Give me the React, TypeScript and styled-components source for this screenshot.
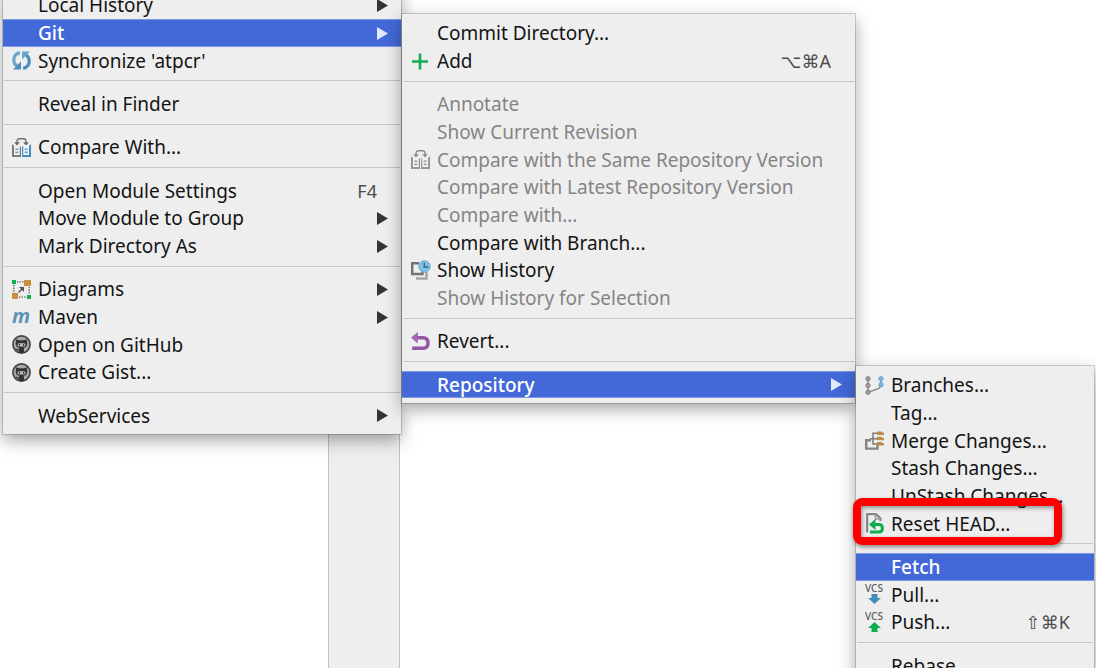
import React from "react";
import styled, { createGlobalStyle, css } from "styled-components";

const GlobalStyle = createGlobalStyle`
  * { box-sizing: border-box; }
  body { margin: 0; background: #fff; overflow: hidden; }
`;

const Page = styled.main`
  position: relative;
  display: flex;
  height: 100vh;
  padding-left: 328px;
  overflow: hidden;
  font-family: "Noto Sans", "Open Sans", sans-serif;
  font-size: 19px;
  line-height: 28px;
`;

const SidePanel = styled.aside`
  width: 72px;
  background: #eeeeee;
  border: solid #c2c2c2;
  border-width: 0 1px;
`;

const Menu = styled.ul<{ $width: number }>`
  position: absolute;
  top: -5px;
  left: calc(100% + 1px);
  z-index: 1;
  width: ${(p) => p.$width}px;
  margin: 0;
  padding: 5px 0;
  list-style: none;
  background: #eeeeee;
  box-shadow: 0 0 0 1px rgba(0, 0, 0, 0.16), 0 6px 16px rgba(0, 0, 0, 0.36);
`;

const RootMenu = styled(Menu)`
  top: -14px;
  left: 3px;
`;

const Row = styled.li`
  position: relative;
  height: 28px;
  &:nth-child(3n) {
    height: 27px;
  }
`;

const Separator = styled.li`
  height: 16px;
  padding: 6px 1px 0;
  &:nth-child(3n) {
    height: 15px;
  }
  &::before {
    content: "";
    display: block;
    height: 1px;
    background: #c6c6c6;
  }
`;

const ItemButton = styled.button<{ $active?: boolean }>`
  display: flex;
  align-items: center;
  width: 100%;
  height: 100%;
  padding: 0 13px 0 9px;
  border: 0;
  background: transparent;
  color: #141414;
  font: inherit;
  text-align: left;
  white-space: nowrap;
  &:disabled {
    color: #858585;
  }
  ${(p) =>
    p.$active &&
    css`
      background: #4369d8;
      border: solid #7f98e4;
      border-width: 1px 0;
      color: #fff;
      font-weight: 500;
    `}
`;

const IconSlot = styled.span`
  display: flex;
  width: 19px;
  height: 19px;
  margin-right: 7px;
`;

const Label = styled.span`
  flex: 1;
`;

const Shortcut = styled.kbd`
  margin-right: 11px;
  color: #4c4c4c;
  font-family: "Noto Sans", "DejaVu Sans", sans-serif;
  font-size: 18px;
`;

const Highlight = styled.div`
  position: absolute;
  top: -12px;
  left: -3px;
  width: 209px;
  height: 47px;
  border: 8px solid #fe0000;
  border-radius: 9px;
  box-shadow: 1px 2px 4px rgba(0, 0, 0, 0.45), inset 1px 2px 4px rgba(0, 0, 0, 0.4);
  pointer-events: none;
`;

const IconSvg = styled.svg`
  overflow: visible;
`;

const Svg = ({ children }: { children: React.ReactNode }) => (
  <IconSvg width="19" height="19" viewBox="0 0 19 19" fill="none" aria-hidden="true">
    {children}
  </IconSvg>
);

const ArrowSvg = styled.svg`
  opacity: 0.85;
`;

const Arrow = () => (
  <ArrowSvg width="11" height="13" viewBox="0 0 11 13" aria-hidden="true">
    <path d="M0 0L11 6.5L0 13Z" fill="currentColor" />
  </ArrowSvg>
);

const SyncIcon = () => (
  <Svg>
    <path d="M7.8 1.6C3.8 2.6 1.4 5.8 1.8 9.6C2 12 3.2 14 5.2 15.2" stroke="#6aa5cb" strokeWidth="3.2" />
    <path d="M1 18.5H9V10.4Z" fill="#4a8fbd" />
    <path d="M11.2 17.4C15.2 16.4 17.6 13.2 17.2 9.4C17 7 15.8 5 13.8 3.8" stroke="#4a8fbd" strokeWidth="3.2" />
    <path d="M18 .5H10V8.6Z" fill="#6aa5cb" />
  </Svg>
);

const CompareIcon = ({ muted }: { muted?: boolean }) => (
  <Svg>
    <path d="M5 5V3.2Q5 .8 7.4 .8H11.6Q14 .8 14 3.2V5" stroke={muted ? "#8c8c8c" : "#707070"} strokeWidth="1.4" />
    <path d="M2.2 4.2H7.8L5 7.6ZM11.2 4.2H16.8L14 7.6Z" fill={muted ? "#8c8c8c" : "#666"} />
    <path d="M0 6L2 8V17H9V19H0Z" fill={muted ? "#969696" : "#7c7c7c"} />
    <path d="M19 6L17 8V17H10V19H19Z" fill={muted ? "#969696" : "#3f8fc0"} />
    <path d="M7.5 8.5H9V19H7.5Z" fill={muted ? "#969696" : "#7c7c7c"} />
    <path d="M10 8.5H11.5V19H10Z" fill={muted ? "#969696" : "#3f8fc0"} />
    <path d="M2 8.5H7.5V17H2ZM11.5 8.5H17V17H11.5Z" fill="#f4f6f8" />
    <path d="M3.2 11.2H6.4M3.2 14.4H6.4M12.6 11.2H15.8M12.6 14.4H15.8" stroke={muted ? "#9c9c9c" : "#6da4c8"} strokeWidth="1.6" />
  </Svg>
);

const DiagramIcon = () => (
  <Svg>
    <path d="M5 1.8H12M1.8 5V13M17.2 7V14M7 17.2H14" stroke="#555" strokeWidth="1.3" strokeDasharray="1.3 1.3" />
    <path d="M0 0H4V4H0ZM15 15H19V19H15Z" fill="#0db14b" />
    <path d="M12 0H19V6H12ZM0 13H6V19H0Z" fill="#c9913c" />
    <path d="M6.5 12.5L11 8" stroke="#555" strokeWidth="1.5" />
    <path d="M7 7H12V12Z" fill="#555" />
  </Svg>
);

const MavenText = styled.text`
  font: italic 700 20px "Open Sans", sans-serif;
  fill: #5f93b4;
`;

const MavenIcon = () => (
  <Svg>
    <MavenText x="0" y="15">m</MavenText>
  </Svg>
);

const GithubIcon = () => (
  <Svg>
    <circle cx="9.5" cy="9.5" r="8.6" fill="#a9a9a9" stroke="#424242" strokeWidth="1.6" />
    <path d="M4.3 4.2L7 5.3H12L14.7 4.2L15.3 8.2C15.6 11 13.8 12.6 11.8 12.8L12.3 18H6.8V15.6C4.8 16 4.5 14.5 3.6 13.5C5 13.4 5.7 14.7 7 14.3L7.2 12.8C5.2 12.6 3.4 11 3.7 8.2Z" fill="#333" />
    <rect x="5.4" y="8.2" width="8.2" height="3.4" rx="1.7" fill="#bdbdbd" />
    <path d="M7.4 9V10.7M11.6 9V10.7" stroke="#333" strokeWidth="1.3" />
  </Svg>
);

const PlusIcon = () => (
  <Svg>
    <path d="M9 1.5V17.5M1 9.5H17" stroke="#12ac50" strokeWidth="2.6" />
  </Svg>
);

const HistoryIcon = () => (
  <Svg>
    <path d="M5 17.5H15.5V11" stroke="#a6a6a6" strokeWidth="2.4" />
    <path d="M8 2.2H1.2V13H11.5V10" stroke="#737373" strokeWidth="2.4" />
    <circle cx="13.5" cy="5.5" r="5.7" fill="#82c0e4" stroke="#5eaad6" />
    <path d="M13.2 1.8V6H17.3" stroke="#32647f" strokeWidth="1.4" />
  </Svg>
);

const RevertIcon = () => (
  <Svg>
    <path d="M5 5.8H12C15.4 5.8 17 8 17 11C17 14.4 15.4 16.3 12 16.3H1.2" stroke="#9355a5" strokeWidth="3.4" />
    <path d="M0 5.8L6.8 0V11.6Z" fill="#a066b2" />
  </Svg>
);

const BranchIcon = () => (
  <Svg>
    <path d="M3 3V16.5M3 16.5L14 12.2Q16 11 16 8V3" stroke="#929292" strokeWidth="1.6" />
    <g fill="#9b9b9b" stroke="#7c7c7c" strokeWidth=".8">
      <circle cx="3" cy="2.7" r="2.2" />
      <circle cx="3" cy="9.5" r="2.2" />
      <circle cx="3" cy="16.3" r="2.2" />
    </g>
    <g fill="#7ab6da" stroke="#5e9fc8" strokeWidth=".8">
      <circle cx="16" cy="2.7" r="2.2" />
      <circle cx="16" cy="8.7" r="2.2" />
    </g>
  </Svg>
);

const MergeIcon = () => (
  <Svg>
    <path d="M6 9.2H1.2V17.6H12.5V14" stroke="#858585" strokeWidth="2.4" />
    <path d="M12 2.2H8V13H12M5 7.8H12" stroke="#7a7a7a" strokeWidth="1.5" />
    <path d="M12 .5H17V1.5H19V4H12ZM12 5.7H17V6.7H19V9.2H12ZM12 10.9H17V11.9H19V14.4H12Z" fill="#c08b45" />
  </Svg>
);

const ResetIcon = () => (
  <Svg>
    <path d="M2.2 18.5V.2H11L15.5 4.5V7" stroke="#858585" strokeWidth="2.2" />
    <path d="M10.5 0V5H15.5" stroke="#9a9a9a" strokeWidth="1.5" />
    <path d="M9 10.5H13.8C16.4 10.5 17.4 12 17.4 14.2C17.4 16.6 16.4 18 13.8 18H5" stroke="#10ad4c" strokeWidth="3" />
    <path d="M4 10.5L10.5 5V16Z" fill="#10ad4c" />
  </Svg>
);

const VcsText = styled.text`
  font: 500 10px "Noto Sans", sans-serif;
  fill: #5c5c5c;
`;

const VcsIcon = ({ up }: { up?: boolean }) => (
  <Svg>
    <VcsText x="0" y="7">VCS</VcsText>
    {up ? (
      <path d="M9.5 9L16 15H12.5V19H6.5V15H3Z" fill="#10ad4c" />
    ) : (
      <path d="M6.5 9H12.5V13H16L9.5 19L3 13H6.5Z" fill="#3f8cb8" />
    )}
  </Svg>
);

type ItemProps = {
  label: string;
  icon?: React.ReactNode;
  shortcut?: string;
  active?: boolean;
  disabled?: boolean;
  submenu?: boolean;
  children?: React.ReactNode;
};

const Item = ({ label, icon, shortcut, active, disabled, submenu, children }: ItemProps) => (
  <Row role="none">
    <ItemButton type="button" role="menuitem" $active={active} disabled={disabled} aria-haspopup={submenu ? "menu" : undefined}>
      <IconSlot>{icon}</IconSlot>
      <Label>{label}</Label>
      {shortcut && <Shortcut>{shortcut}</Shortcut>}
      {submenu && <Arrow />}
    </ItemButton>
    {children}
  </Row>
);

const Line = () => <Separator role="separator" />;

const RepositoryMenu = () => (
  <Menu role="menu" aria-label="Repository" $width={238}>
    <Item label="Branches..." icon={<BranchIcon />} />
    <Item label="Tag..." />
    <Item label="Merge Changes..." icon={<MergeIcon />} />
    <Item label="Stash Changes..." />
    <Item label="UnStash Changes..." />
    <Item label="Reset HEAD..." icon={<ResetIcon />}>
      <Highlight />
    </Item>
    <Line />
    <Item label="Fetch" active />
    <Item label="Pull..." icon={<VcsIcon />} />
    <Item label="Push..." icon={<VcsIcon up />} shortcut="⇧⌘K" />
    <Line />
    <Item label="Rebase..." />
  </Menu>
);

const GitMenu = () => (
  <Menu role="menu" aria-label="Git" $width={453}>
    <Item label="Commit Directory..." />
    <Item label="Add" icon={<PlusIcon />} shortcut="⌥⌘A" />
    <Line />
    <Item label="Annotate" disabled />
    <Item label="Show Current Revision" disabled />
    <Item label="Compare with the Same Repository Version" icon={<CompareIcon muted />} disabled />
    <Item label="Compare with Latest Repository Version" disabled />
    <Item label="Compare with..." disabled />
    <Item label="Compare with Branch..." />
    <Item label="Show History" icon={<HistoryIcon />} />
    <Item label="Show History for Selection" disabled />
    <Line />
    <Item label="Revert..." icon={<RevertIcon />} />
    <Line />
    <Item label="Repository" active submenu>
      <RepositoryMenu />
    </Item>
  </Menu>
);

export default function App() {
  return (
    <Page>
      <GlobalStyle />
      <SidePanel />
      <RootMenu role="menu" aria-label="Project" $width={398}>
        <Item label="Local History" submenu />
        <Item label="Git" active submenu>
          <GitMenu />
        </Item>
        <Item label="Synchronize 'atpcr'" icon={<SyncIcon />} />
        <Line />
        <Item label="Reveal in Finder" />
        <Line />
        <Item label="Compare With..." icon={<CompareIcon />} />
        <Line />
        <Item label="Open Module Settings" shortcut="F4" />
        <Item label="Move Module to Group" submenu />
        <Item label="Mark Directory As" submenu />
        <Line />
        <Item label="Diagrams" icon={<DiagramIcon />} submenu />
        <Item label="Maven" icon={<MavenIcon />} submenu />
        <Item label="Open on GitHub" icon={<GithubIcon />} />
        <Item label="Create Gist..." icon={<GithubIcon />} />
        <Line />
        <Item label="WebServices" submenu />
      </RootMenu>
    </Page>
  );
}
